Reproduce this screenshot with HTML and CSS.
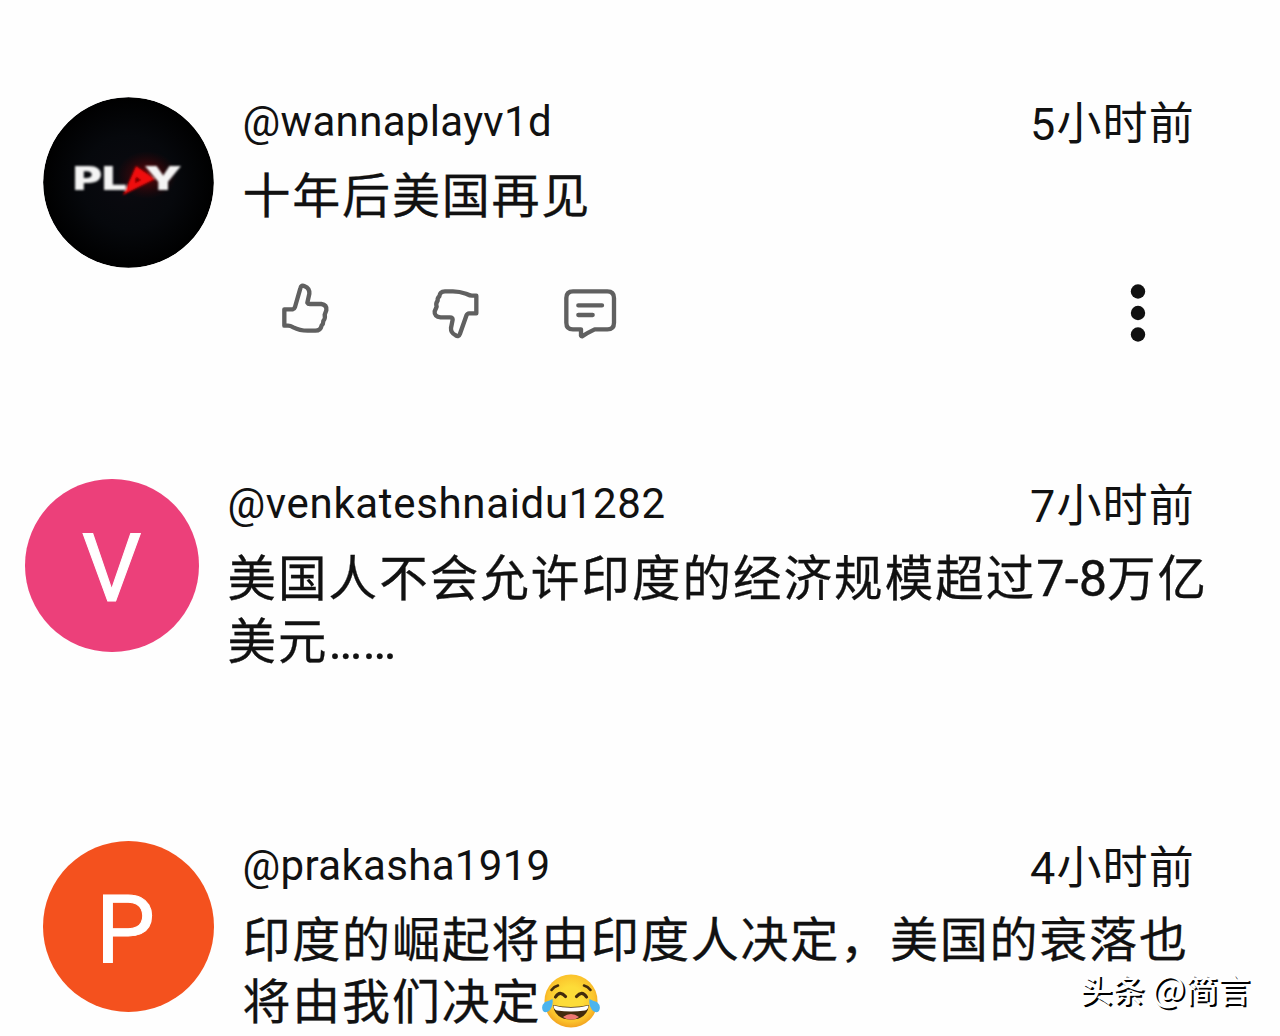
FILE: index.html
```html
<!DOCTYPE html>
<html lang="zh-CN">
<head>
<meta charset="utf-8">
<title>评论</title>
<link rel="stylesheet" href="styles.css">
</head>
<body>
<main class="comments">
  <article class="comment comment-first">
    <svg class="avatar" viewBox="0 0 171 171" role="img" aria-label="PLAY">
      <defs>
        <radialGradient id="glow"><stop offset="0" stop-color="#c00" stop-opacity=".5"/><stop offset="1" stop-color="#700" stop-opacity="0"/></radialGradient>
        <radialGradient id="night" cx=".5" cy=".5" r=".5"><stop offset="0" stop-color="#0b0a10"/><stop offset=".55" stop-color="#06080c"/><stop offset="1" stop-color="#000"/></radialGradient>
        <filter id="soft"><feGaussianBlur stdDeviation=".9"/></filter>
      </defs>
      <circle cx="85.5" cy="85.5" r="85.3" fill="url(#night)"/>
      <ellipse cx="104" cy="78" rx="30" ry="24" fill="url(#glow)"/>
      <g filter="url(#soft)" class="logo">
        <text x="30" y="92.500" textLength="54" lengthAdjust="spacingAndGlyphs">PL</text>
        <text x="101" y="92.500" textLength="38" lengthAdjust="spacingAndGlyphs">Y</text>
        <path d="M93 69 L112 82 L80 98 Z" fill="#f00808"/>
        <path d="M93 80 L98 83 L92 86 Z" fill="#500"/>
      </g>
    </svg>
    <div class="content">
      <header class="meta"><span class="name">@wannaplayv1d</span><time class="time">5小时前</time></header>
      <p class="text">十年后美国再见</p>
      <div class="actions">
        <svg class="icon like" viewBox="60 30 156 180">
          <path d="M73 118 H98 Q103 117 105 111 L121 55 Q124 43 134 49 Q149 55 148 71 L142 98 Q144 102 150 102 H184 Q201 104 199 121 L194 134 Q197 145 190 153 Q190 162 185 166 Q182 182 166 182 H143 Q119 182 100 172 Q91 167 84 167 H73 Z"/>
        </svg>
        <svg class="icon dislike" viewBox="511 30 156 180">
          <path d="M650 130 H628 Q623 130 620 137 L601 191 Q597 202 588 196 Q573 189 574 174 L579 149 Q579 142 571 142 H543 Q523 140 525 124 L531 110 Q527 101 534 92 Q533 83 539 79 Q540 65 556 64 H575 Q597 63 619 71 Q632 77 637 77 H650 Z"/>
        </svg>
        <svg class="icon reply" viewBox="906 30 174 180">
          <path d="M939 64 H1042 Q1062 64 1062 84 V158 Q1062 178 1042 178 H1004 Q983 188 966 199 Q962 199 963 193 V178 H939 Q919 178 919 158 V84 Q919 64 939 64 Z M955 106 H1026 M955 135 H998"/>
        </svg>
        <svg class="more" viewBox="0 0 16 64"><circle cx="8" cy="11.500" r="7.2"/><circle cx="8" cy="33" r="7.2"/><circle cx="8" cy="54.500" r="7.2"/></svg>
      </div>
    </div>
  </article>

  <article class="comment comment-second">
    <div class="avatar letter pink">V</div>
    <div class="content">
      <header class="meta"><span class="name">@venkateshnaidu1282</span><time class="time">7小时前</time></header>
      <p class="text">美国人不会允许印度的经济规模超过<span class="latin">7-8</span>万亿<br>美元<span class="latin">……</span></p>
    </div>
  </article>

  <article class="comment comment-third">
    <div class="avatar letter orange">P</div>
    <div class="content">
      <header class="meta"><span class="name">@prakasha1919</span><time class="time">4小时前</time></header>
      <p class="text">印度的崛起将由印度人决定，美国的衰落也<br>将由我们决定<svg class="emoji" viewBox="0 0 60 54">
        <defs>
          <radialGradient id="face" cx=".5" cy=".45" r=".55"><stop offset=".4" stop-color="#fddc38"/><stop offset=".8" stop-color="#fbc32c"/><stop offset="1" stop-color="#f2a21f"/></radialGradient>
        </defs>
        <circle cx="30" cy="27" r="26.500" fill="url(#face)"/>
        <path d="M12 31 Q30 35 48 31 Q46 45.500 30 45.500 Q14 45.500 12 31Z" fill="#422b0d"/>
        <path d="M12.5 31.500 Q30 36 47.500 31.500 Q47 36 44 36.500 Q30 38.500 16 36.500 Q13 36 12.500 31.500Z" fill="#fff"/>
        <path d="M22 43 Q30 37 38 43 Q35 45.500 30 45.500 Q25 45.500 22 43Z" fill="#ed7770"/>
        <g fill="none" stroke="#422b0d" stroke-linecap="round"><path d="M14.500 23 Q19 16 24.500 22.500 M35.500 22.500 Q41 16 45.500 23" stroke-width="3.2"/><path d="M10.500 16 Q13 12.500 17 11.500 M43 11.500 Q47 12.500 49.500 16" stroke-width="2.6"/></g>
        <path d="M11.500 25 Q12.500 32 9 36 Q5 40 2 37 Q-.5 32 4 28 Q8 27 11.500 25Z M48.500 25 Q47.500 32 51 36 Q55 40 58 37 Q60.500 32 56 28 Q52 27 48.500 25Z" fill="#4bb4ee"/>
      </svg></p>
    </div>
  </article>
  <div class="watermark">头条 <span class="at">@</span>简言</div>
</main>
</body>
</html>
```
FILE: styles.css
```css
* { box-sizing: border-box; }
body {
  margin: 0;
  background: #fefefe;
  color: #111;
  font-family: Roboto, "Noto Sans CJK SC", sans-serif;
}
.comments {
  position: relative;
  width: 1280px;
  height: 1036px;
  overflow: hidden;
  padding-top: 97px;
}
.comment {
  display: flex;
  align-items: flex-start;
  padding: 0 86px 0 42.500px;
}
.comment-first { height: 381.500px; --size: 48px; --track: 1.800px; }
.comment-second { height: 362.500px; padding-left: 25px; --size: 48.500px; --track: 2.050px; }
.comment-third { --size: 48px; --track: 1.800px; }
.avatar {
  flex: none;
  width: 171px;
  height: 171px;
  border-radius: 50%;
}
.comment-second .avatar { width: 173.500px; height: 173.500px; }
.content { flex: 1; min-width: 0; margin-left: 29px; }
.comment-first .avatar { display: block; }
.logo text {
  font-family: Inter, sans-serif;
  font-weight: 900;
  font-size: 33px;
  fill: #f4f4f4;
}
.letter {
  display: flex;
  align-items: center;
  justify-content: center;
  color: #fff;
  font-size: 94px;
  line-height: 1;
  padding: 7px 0 0 0;
  -webkit-text-stroke: 1px #fff;
}
.pink { background: #ec407a; }
.orange { background: #f4511e; padding: 6px 5px 0 0; }
.meta {
  display: flex;
  justify-content: space-between;
  height: 68.500px;
  line-height: 50px;
}
.comment-second .meta { height: 70.500px; }
.name { font-size: 42px; letter-spacing: .330px; }
.comment-second .name { letter-spacing: .660px; }
.time { font-size: 45px; letter-spacing: 1.200px; margin: 3px -1px 0 0; }
.text {
  margin: 0;
  font-size: var(--size);
  letter-spacing: var(--track);
  line-height: 62.500px;
  white-space: nowrap;
  -webkit-text-stroke: .3px #111;
}
.latin { font-size: 50.500px; letter-spacing: 0; line-height: 1; }
.actions {
  display: flex;
  align-items: flex-start;
  margin-top: 52px;
  padding: 0 48px 0 37.500px;
}
.icon {
  height: 60px;
  fill: none;
  stroke: #606060;
  stroke-width: 13;
  stroke-linejoin: round;
  stroke-linecap: round;
}
.like, .dislike { width: 52px; margin-right: 98px; }
.dislike { margin-right: 80px; }
.reply { width: 58px; }
.more { width: 16px; height: 64px; margin-left: auto; fill: #111; }
.emoji { width: 60px; height: 54px; vertical-align: -8px; margin: -8px 0; position: relative; top: -7px; }
.watermark {
  position: absolute;
  right: 30px;
  bottom: 24px;
  color: #fff;
  font: 500 32.300px/48px "Noto Sans CJK SC", sans-serif;
  text-shadow: 2px 2px 0 #000;
}
.at { font-size: 35.500px; line-height: 1; font-weight: 400; }
```
